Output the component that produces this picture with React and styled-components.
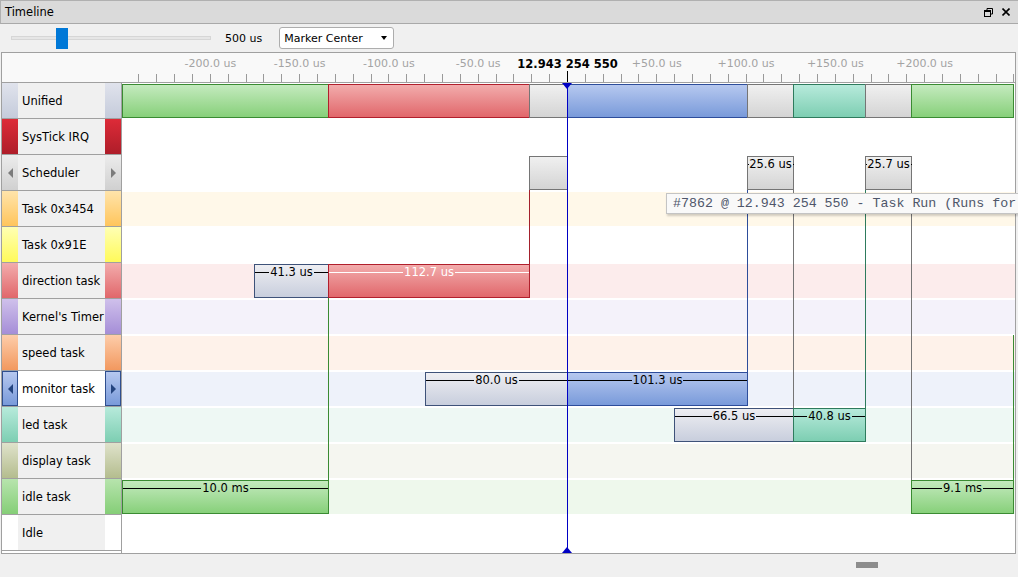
import React from 'react';
import styled, { createGlobalStyle, css } from 'styled-components';

const GlobalStyle = createGlobalStyle`
  html, body { margin: 0; padding: 0; background: #f0f0f0; }
  body {
    font-family: "DejaVu Sans", "Liberation Sans", sans-serif;
    font-size: 11px;
    color: #000;
  }
  * { box-sizing: border-box; }
`;

/* ---------- data ---------- */
const TICK = 17.857; // px per 10 us
const MARKER_X = 445; // marker in chart coords
const CHART_W = 893;

const PALETTE = {
  green: { top: '#c4eabe', bottom: '#87d07a', border: '#3a8b32', text: '#000' },
  red: { top: '#f2acac', bottom: '#e1676b', border: '#b11f2c', text: '#fff' },
  gray: { top: '#f0f0f0', bottom: '#d4d4d4', border: '#757575', text: '#000' },
  blue: { top: '#b6c8ef', bottom: '#799ada', border: '#2d4d9b', text: '#000' },
  teal: { top: '#b7eadb', bottom: '#7dceb2', border: '#2e7b5d', text: '#000' },
  wait: { top: '#eeeef2', bottom: '#c8cedd', border: '#3e5279', text: '#000' },
};

const ROWS = [
  { name: 'Unified', swatch: ['#e0e3ec', '#c5cbdb'], blocks: [
    [0, 206, 'green'], [206, 407, 'red'], [407, 445, 'gray'], [445, 625, 'blue'],
    [625, 671, 'gray'], [671, 743, 'teal'], [743, 789, 'gray'], [789, 891, 'green'],
  ] },
  { name: 'SysTick IRQ', swatch: ['#dd2b38', '#ae1d29'] },
  { name: 'Scheduler', swatch: ['#ececec', '#d0d0d0'], arrows: 'plain', blocks: [
    [407, 445, 'gray'], [625, 671, 'gray', '25.6 us'], [743, 789, 'gray', '25.7 us'],
  ] },
  { name: 'Task 0x3454', swatch: ['#ffe4ab', '#ffc55c'], band: '#fff8e9' },
  { name: 'Task 0x91E', swatch: ['#ffffb4', '#fffa5a'] },
  { name: 'direction task', swatch: ['#f2acac', '#e1676b'], band: '#fcecec', blocks: [
    [132, 206, 'wait', '41.3 us'], [206, 407, 'red', '112.7 us'],
  ] },
  { name: "Kernel's Timer", swatch: ['#cfc0eb', '#a58ed7'], band: '#f4f2fa' },
  { name: 'speed task', swatch: ['#fdcdaa', '#f2985f'], band: '#fef2ea' },
  { name: 'monitor task', swatch: ['#b6c8ef', '#799ada'], band: '#eef2fa', selected: true, arrows: 'selected', blocks: [
    [303, 445, 'wait', '80.0 us'], [445, 625, 'blue', '101.3 us'],
  ] },
  { name: 'led task', swatch: ['#b7eadb', '#7dceb2'], band: '#eef8f4', blocks: [
    [552, 671, 'wait', '66.5 us'], [671, 743, 'teal', '40.8 us'],
  ] },
  { name: 'display task', swatch: ['#dfe2cb', '#b4bd8e'], band: '#f5f6f0' },
  { name: 'idle task', swatch: ['#b7e4ad', '#85ce77'], band: '#eef8ec', blocks: [
    [0, 206, 'green', '10.0 ms'], [789, 891, 'green', '9.1 ms'],
  ] },
  { name: 'Idle', swatch: ['#ffffff', '#ffffff'] },
];

// [x, yTop, yBottom, color] in chart coordinates
const CONNECTORS = [
  [407, 106, 181, '#a3202c'],
  [206, 214, 397, '#3a8b32'],
  [625, 106, 289, '#2d4d9b'],
  [671, 106, 325, '#757575'],
  [743, 106, 325, '#2e7b5d'],
  [789, 106, 397, '#757575'],
  [891, 252, 397, '#3a8b32'],
];

const ticks = [];
for (let k = -25; k <= 25; k++) {
  const x = MARKER_X + k * TICK;
  if (x >= 0 && x <= CHART_W - 1) ticks.push({ k, x });
}

/* ---------- window chrome ---------- */
const Window = styled.div`
  width: 1018px;
  height: 577px;
  overflow: hidden;
  display: flex;
  flex-direction: column;
  background: #f0f0f0;
`;

const TitleBar = styled.div`
  height: 24px;
  flex: none;
  display: flex;
  align-items: center;
  justify-content: space-between;
  padding: 0 8px 0 4px;
  background: #dadada;
  border-top: 1px solid #b0b0b0;
  border-left: 1px solid #b0b0b0;
  border-bottom: 1px solid #a9a9a9;
`;

const Title = styled.span`
  font-size: 11.5px;
  color: #000;
`;

const TitleButtons = styled.div`
  display: flex;
  align-items: center;
  gap: 9px;
`;

const Toolbar = styled.div`
  height: 28px;
  flex: none;
  display: flex;
  align-items: center;
  padding-left: 11px;
`;

const Slider = styled.div`
  position: relative;
  width: 200px;
  height: 21px;
  display: flex;
  align-items: center;
`;

const Track = styled.div`
  width: 100%;
  height: 4px;
  background: #e6e6e6;
  border: 1px solid #d6d6d6;
`;

const Thumb = styled.div`
  position: absolute;
  top: 0;
  width: 12px;
  height: 21px;
  background: #0078d7;
`;

const ZoomLabel = styled.span`
  margin-left: 14px;
  font-size: 11px;
`;

const Select = styled.div`
  margin-left: 17px;
  width: 115px;
  height: 22px;
  display: flex;
  align-items: center;
  justify-content: space-between;
  padding: 0 6px 0 4px;
  background: #fff;
  border: 1px solid #adadad;
  border-radius: 3px;
`;

const Caret = styled.span`
  width: 0;
  height: 0;
  border-left: 3.5px solid transparent;
  border-right: 3.5px solid transparent;
  border-top: 4px solid #000;
`;

/* ---------- panel ---------- */
const Panel = styled.div`
  margin-left: 1px;
  width: 1015px;
  height: 502px;
  flex: none;
  display: flex;
  flex-direction: column;
  border: 1px solid #a0a0a0;
  background: #fff;
`;

const RulerRow = styled.div`
  height: 30px;
  flex: none;
  display: flex;
  background: #f9f9f9;
  border-bottom: 1px solid #a0a0a0;
`;

const RulerCorner = styled.div`
  width: 120px;
  flex: none;
`;

const Ruler = styled.div`
  position: relative;
  flex: 1;
`;

const Tick = styled.div`
  position: absolute;
  bottom: 0;
  width: 1px;
  height: ${(p) => (p.$center ? '11px' : '8px')};
  background: ${(p) => (p.$center ? '#000' : '#9a9a9a')};
`;

const TickLabel = styled.div`
  position: absolute;
  top: 4px;
  transform: translateX(-50%);
  white-space: nowrap;
  font-size: ${(p) => (p.$center ? '11.5px' : '11px')};
  font-weight: ${(p) => (p.$center ? 700 : 400)};
  color: ${(p) => (p.$center ? '#000' : '#a3a3a3')};
`;

const Body = styled.div`
  flex: 1;
  display: flex;
  min-height: 0;
`;

const LabelColumn = styled.div`
  width: 120px;
  flex: none;
  display: flex;
  flex-direction: column;
  border-right: 1px solid #a0a0a0;
  background: #fff;
`;

const LabelCell = styled.div`
  height: 36px;
  flex: none;
  display: flex;
  border-bottom: 1px solid #a0a0a0;
  background: ${(p) => (p.$selected ? '#fff' : '#f0f0f0')};
`;

const Swatch = styled.div`
  width: 16px;
  flex: none;
  display: flex;
  align-items: center;
  justify-content: center;
  background: linear-gradient(${(p) => p.$top}, ${(p) => p.$bottom});
  ${(p) => p.$selected && css`border: 1px solid #2f4f8f;`}
`;

const Arrow = styled.span`
  width: 0;
  height: 0;
  border-top: 5px solid transparent;
  border-bottom: 5px solid transparent;
  ${(p) => (p.$dir === 'left'
    ? css`border-right: 5px solid ${p.$color};`
    : css`border-left: 5px solid ${p.$color};`)}
`;

const LabelText = styled.div`
  width: 87px;
  flex: none;
  padding-left: 4px;
  display: flex;
  align-items: center;
  overflow: hidden;
  white-space: nowrap;
  font-size: 11.5px;
`;

const Chart = styled.div`
  position: relative;
  flex: 1;
  display: flex;
  flex-direction: column;
`;

const Lane = styled.div`
  position: relative;
  height: 36px;
  flex: none;
  padding: 1px 0;
  background: ${(p) => p.$band || '#fff'};
  background-clip: content-box;
`;

const Block = styled.div`
  position: absolute;
  top: 1px;
  height: 34px;
  border: 1px solid ${(p) => p.$c.border};
  background: linear-gradient(${(p) => p.$c.top}, ${(p) => p.$c.bottom});
  color: ${(p) => p.$c.text};
  z-index: 2;
`;

const BlockLabel = styled.div`
  height: 14px;
  display: flex;
  align-items: center;
  font-size: 11.5px;
  white-space: nowrap;
  &::before, &::after {
    content: '';
    flex: 1;
    height: 1px;
    background: currentColor;
  }
`;

const BlockText = styled.span`
  padding: 0 1px;
`;

const Connector = styled.div`
  position: absolute;
  width: 1px;
  z-index: 1;
`;

const MarkerLine = styled.div`
  position: absolute;
  top: 0;
  bottom: 0;
  width: 1px;
  background: #0000c4;
  z-index: 3;
`;

const MarkerHead = styled.div`
  position: absolute;
  left: -5px;
  width: 0;
  height: 0;
  border-left: 5.5px solid transparent;
  border-right: 5.5px solid transparent;
  ${(p) => (p.$bottom
    ? css`bottom: 0; border-bottom: 6px solid #0000c4;`
    : css`top: 0; border-top: 6px solid #0000c4;`)}
`;

const Tooltip = styled.div`
  position: absolute;
  top: 110px;
  left: 544px;
  width: 360px;
  height: 21px;
  display: flex;
  align-items: center;
  padding-left: 6px;
  background: #f9f9f9;
  border: 1px solid #c4c4c4;
  box-shadow: 1px 2px 2px rgba(0, 0, 0, 0.18);
  font-family: "Liberation Mono", "DejaVu Sans Mono", monospace;
  font-size: 13.3px;
  color: #4e566a;
  white-space: pre;
  overflow: hidden;
  z-index: 4;
`;

const BottomBar = styled.div`
  flex: 1;
  padding: 8px 0 0 856px;
`;

const ScrollThumb = styled.div`
  width: 22px;
  height: 6px;
  background: #8d8d8d;
`;

/* ---------- icons ---------- */
const RestoreIcon = () => (
  <svg width="9" height="9" viewBox="0 0 9 9" fill="none" stroke="#000" strokeWidth="1">
    <path d="M3 2.5V0.5H8.5V6H6.5" />
    <rect x="0.5" y="2.5" width="6" height="6" />
    <path d="M0.5 3.5H6.5" />
  </svg>
);

const CloseIcon = () => (
  <svg width="8" height="8" viewBox="0 0 8 8" stroke="#000" strokeWidth="1.6">
    <path d="M0.5 0.5L7.5 7.5M7.5 0.5L0.5 7.5" />
  </svg>
);

/* ---------- app ---------- */
export default function App() {
  return (
    <>
      <GlobalStyle />
      <Window>
        <TitleBar>
          <Title>Timeline</Title>
          <TitleButtons>
            <RestoreIcon />
            <CloseIcon />
          </TitleButtons>
        </TitleBar>

        <Toolbar>
          <Slider>
            <Track />
            <Thumb style={{ left: 45 }} />
          </Slider>
          <ZoomLabel>500 us</ZoomLabel>
          <Select>
            <span>Marker Center</span>
            <Caret />
          </Select>
        </Toolbar>

        <Panel>
          <RulerRow>
            <RulerCorner />
            <Ruler>
              {ticks.map(({ k, x }) => (
                <Tick key={k} $center={k === 0} style={{ left: Math.round(x) }} />
              ))}
              {ticks.filter(({ k }) => k % 5 === 0 && Math.abs(k) <= 20).map(({ k, x }) => (
                <TickLabel key={k} $center={k === 0} style={{ left: x + 0.5 }}>
                  {k === 0 ? '12.943 254 550' : `${k > 0 ? '+' : ''}${(k * 10).toFixed(1)} us`}
                </TickLabel>
              ))}
            </Ruler>
          </RulerRow>

          <Body>
            <LabelColumn>
              {ROWS.map((r) => (
                <LabelCell key={r.name} $selected={r.selected}>
                  <Swatch $top={r.swatch[0]} $bottom={r.swatch[1]} $selected={r.selected}>
                    {r.arrows && <Arrow $dir="left" $color={r.selected ? '#24447f' : '#7c7c7c'} />}
                  </Swatch>
                  <LabelText>{r.name}</LabelText>
                  <Swatch $top={r.swatch[0]} $bottom={r.swatch[1]} $selected={r.selected}>
                    {r.arrows && <Arrow $dir="right" $color={r.selected ? '#24447f' : '#7c7c7c'} />}
                  </Swatch>
                </LabelCell>
              ))}
            </LabelColumn>

            <Chart>
              {ROWS.map((r) => (
                <Lane key={r.name} $band={r.band}>
                  {(r.blocks || []).map(([x1, x2, kind, label]) => (
                    <Block key={x1} $c={PALETTE[kind]} style={{ left: x1, width: x2 - x1 + 1 }}>
                      {label && (
                        <BlockLabel>
                          <BlockText>{label}</BlockText>
                        </BlockLabel>
                      )}
                    </Block>
                  ))}
                </Lane>
              ))}
              {CONNECTORS.map(([x, y1, y2, color]) => (
                <Connector key={`${x}-${y1}`} style={{ left: x, top: y1, height: y2 - y1, background: color }} />
              ))}
              <MarkerLine style={{ left: MARKER_X }}>
                <MarkerHead />
                <MarkerHead $bottom />
              </MarkerLine>
              <Tooltip>#7862 @ 12.943 254 550 - Task Run (Runs for</Tooltip>
            </Chart>
          </Body>
        </Panel>

        <BottomBar>
          <ScrollThumb />
        </BottomBar>
      </Window>
    </>
  );
}
